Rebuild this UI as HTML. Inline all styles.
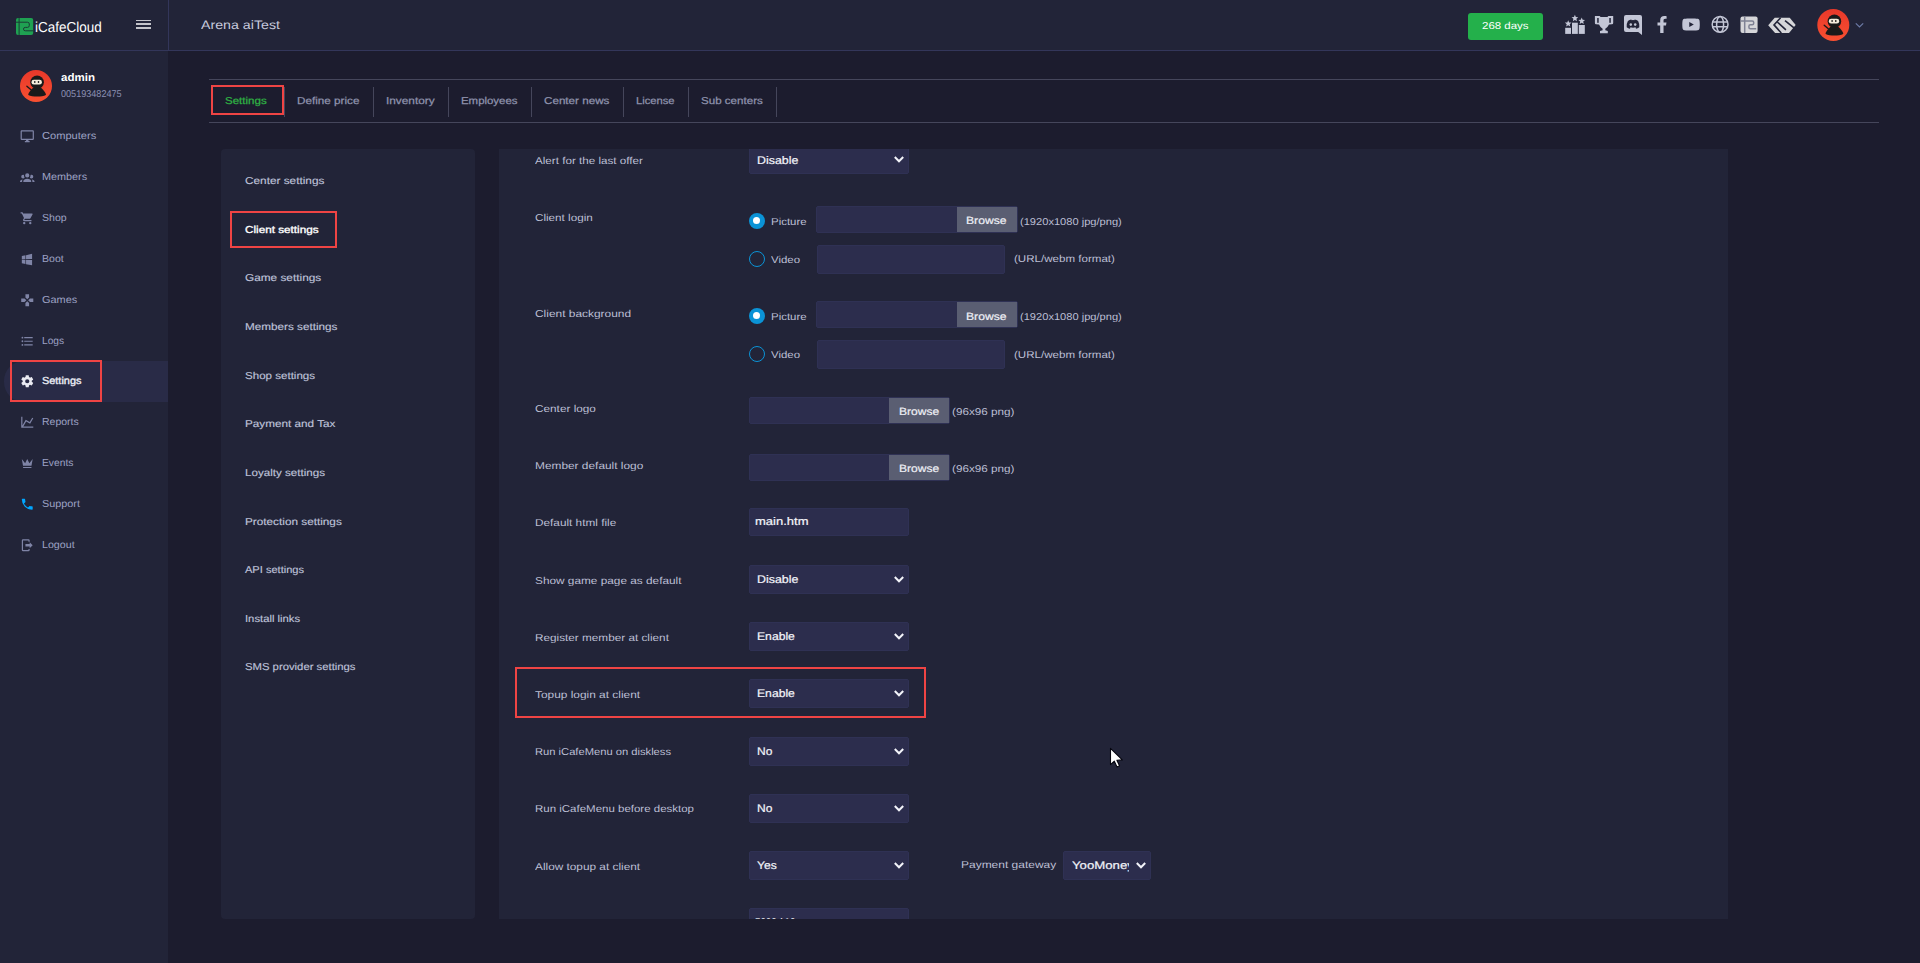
<!DOCTYPE html>
<html lang="en">
<head>
<meta charset="utf-8">
<title>iCafeCloud - Client settings</title>
<style>
*{box-sizing:border-box;margin:0;padding:0}
html,body{width:1920px;height:963px;overflow:hidden;background:#1c1c2e;font-family:"Liberation Sans",sans-serif;}
.abs{position:absolute}
.t,.ts{position:absolute;white-space:nowrap;line-height:20px;transform-origin:0 50%;text-rendering:geometricPrecision;font-family:"Liberation Sans",sans-serif;}
#header{position:absolute;left:0;top:0;width:1920px;height:51px;background:#222438;border-bottom:1px solid #33365a}
#hsep{position:absolute;left:168px;top:0;width:1px;height:50px;background:#33365a}
#sidebar{position:absolute;left:0;top:51px;width:168px;height:912px;background:#222438}
#active{position:absolute;left:4px;top:361px;width:164px;height:41px;background:#292b47;border-radius:20px 0 0 20px}
.red{position:absolute;border:2px solid #ef4444}
.line{position:absolute;background:#45465b}
.panel{position:absolute;background:#222438;border-radius:4px}
.inp{position:absolute;background:#2c2d4d;border:1px solid #2f3154;border-radius:2px}
.btn{position:absolute;background:#5a5e72}
svg{position:absolute;overflow:visible}
.radio{position:absolute;width:16px;height:16px;border-radius:50%}
.radio.on{background:#0b93d6}
.radio.on::after{content:"";position:absolute;left:4.1px;top:4.1px;width:7px;height:7px;border-radius:50%;background:#fff}
.radio.off{border:1.5px solid #0b93d6}
</style>
</head>
<body>
<div id="header"></div>
<div id="hsep"></div>
<div id="sidebar"></div>
<div id="active"></div>

<!-- logo -->
<svg style="left:16px;top:18px" width="17.2" height="17" viewBox="0 0 17.2 17"><rect width="17.2" height="17" rx="2" fill="#1fa152"/><path d="M3.1 0V17M0 4.2H11.500Q13.300 4.200 13.300 6V7.600Q13.300 9.400 11.500 9.400H9.300Q7.500 9.400 7.500 11V11.200Q7.500 12.800 9.300 12.800H17.200" fill="none" stroke="#1b3a35" stroke-width="1"/></svg>
<!-- hamburger -->
<div class="abs" style="left:136px;top:19.7px;width:15px;height:1.6px;background:#c4c4ca"></div>
<div class="abs" style="left:136px;top:23.4px;width:15px;height:1.7px;background:#c4c4ca"></div>
<div class="abs" style="left:136px;top:27.1px;width:15px;height:1.9px;background:#c4c4ca"></div>

<svg style="left:0;top:0" width="1920" height="51" viewBox="0 0 1920 51">
<defs><linearGradient id="av" x1="0" y1="0" x2="0" y2="1"><stop offset="0" stop-color="#e8382a"/><stop offset="1" stop-color="#f85031"/></linearGradient></defs>
<rect x="1468" y="13" width="75" height="27" rx="3" fill="#24b04b"/>
<rect x="1565.200" y="27.800" width="5.800" height="6.100" fill="#c3c6d6"/><rect x="1572" y="22.700" width="5.800" height="11.200" fill="#c3c6d6"/><rect x="1578.800" y="25" width="6" height="8.900" fill="#c3c6d6"/>
<polygon points="1568.20,20.20 1569.13,22.43 1571.53,22.62 1569.70,24.19 1570.26,26.53 1568.20,25.27 1566.14,26.53 1566.70,24.19 1564.87,22.62 1567.27,22.43" fill="#c3c6d6"/>
<polygon points="1574.90,14.80 1575.83,17.03 1578.23,17.22 1576.40,18.79 1576.96,21.13 1574.90,19.88 1572.84,21.13 1573.40,18.79 1571.57,17.22 1573.97,17.03" fill="#c3c6d6"/>
<polygon points="1581.70,17.60 1582.63,19.83 1585.03,20.02 1583.20,21.59 1583.76,23.93 1581.70,22.68 1579.64,23.93 1580.20,21.59 1578.37,20.02 1580.77,19.83" fill="#c3c6d6"/>
<path fill="#c3c6d6" d="M1594.900 15.900H1599.600L1600.600 17H1607.400L1608.400 15.900H1613.200V23Q1613.200 24.200 1612 24.300L1609 24.400Q1607.500 27.500 1605.300 28.800V30.300L1607.800 31V33.200H1600V31L1602.600 30.300V28.800Q1600.500 27.500 1599 24.400L1596 24.300Q1594.900 24.200 1594.900 23Z"/>
<rect x="1597.200" y="18" width="1.500" height="4.800" fill="#222438"/><rect x="1609.300" y="18" width="1.500" height="4.800" fill="#222438"/>
<path fill="#c3c6d6" d="M1626 14.900H1640Q1642 14.900 1642 16.900V34.900L1638.200 31.900H1626Q1624 31.900 1624 29.900V16.900Q1624 14.900 1626 14.900Z"/>
<path fill="#222438" d="M1627.900 20.900Q1629.400 19.700 1631.300 19.500L1631.700 20.200Q1633 20 1634.300 20.200L1634.700 19.500Q1636.600 19.700 1638.100 20.900Q1639.700 23.700 1639.300 27.200Q1637.800 28.400 1636.100 28.700L1635.400 27.600L1636.300 27.100Q1633 28.400 1629.700 27.100L1630.600 27.600L1629.900 28.700Q1628.200 28.400 1626.700 27.200Q1626.300 23.700 1627.900 20.900Z"/>
<ellipse cx="1630.800" cy="24.600" rx="1.250" ry="1.400" fill="#c3c6d6"/><ellipse cx="1635.200" cy="24.600" rx="1.250" ry="1.400" fill="#c3c6d6"/>
<path transform="translate(1656.74 16) scale(0.03320)" fill="#c3c6d6" d="M279.140 288l14.220-92.660h-88.910v-60.130c0-25.350 12.420-50.060 52.240-50.060h40.420V6.260S260.430 0 225.360 0c-73.220 0-121.080 44.380-121.080 124.720v70.620H22.890V288h81.390v224h100.170V288z"/>
<path transform="translate(1681.82 16.37) scale(0.03204 0.03177)" fill="#c3c6d6" d="M549.655 124.083c-6.281-23.650-24.787-42.276-48.284-48.597C458.781 64 288 64 288 64S117.220 64 74.629 75.486c-23.497 6.322-42.003 24.947-48.284 48.597-11.412 42.867-11.412 132.305-11.412 132.305s0 89.438 11.412 132.305c6.281 23.650 24.787 41.500 48.284 47.821C117.220 448 288 448 288 448s170.780 0 213.371-11.486c23.497-6.321 42.003-24.171 48.284-47.821 11.412-42.867 11.412-132.305 11.412-132.305s0-89.438-11.412-132.305zm-317.510 213.508V175.185l142.739 81.205-142.739 81.201z"/>
<g fill="none" stroke="#c3c6d6" stroke-width="1.500"><circle cx="1720.1" cy="24.4" r="7.9"/><ellipse cx="1720.1" cy="24.4" rx="3.500" ry="7.9"/><path d="M1712.5 22.0H1727.6999999999998M1712.5 26.799999999999997H1727.6999999999998" stroke-width="1.400"/></g>
<rect x="1740.500" y="16.600" width="17.100" height="16.400" rx="2" fill="#d6d6d9"/>
<path d="M1744.700 16.600V33M1740.500 20.900H1752.200Q1753.700 20.900 1753.700 22.400V23.200Q1753.700 24.700 1752.200 24.700H1750.400Q1748.900 24.700 1748.900 26.200V27.300Q1748.900 28.800 1750.400 28.800H1756.200" fill="none" stroke="#7f8294" stroke-width="1.500"/>
<polygon points="1768.200,25.300 1774.700,17.800 1789.700,17.800 1795.700,25 1789,33 1775.100,33" fill="#d6d6d9"/>
<g fill="none" stroke="#222438" stroke-width="1.600"><path d="M1780.600 17.800L1774 24.900L1781.300 33"/><path d="M1777.300 22L1785.900 29.900"/><path d="M1785 20.600L1794.600 28.300"/></g>
<polygon points="1796,25.600 1792.300,29.600 1794,31 1797,27" fill="#222438"/>
<g transform="translate(1817.3 9)"><circle cx="16" cy="16" r="16" fill="url(#av)"/><circle cx="17.100" cy="12.200" r="6.800" fill="#1a1a1a"/><path d="M17.100 16.500C14 16.500 11.500 19 9.600 21.800C8.600 23.300 8 24.300 8.400 24.900C10 26 14 26.400 17.100 26.400C20.200 26.400 24.200 26 25.800 24.900C26.200 24.300 25.600 23.300 24.600 21.800C22.700 19 20.200 16.500 17.100 16.500Z" fill="#1a1a1a"/><rect x="11.500" y="9.700" width="10.400" height="4.800" rx="2.300" fill="#f5eddc"/><ellipse cx="14.800" cy="12" rx="0.800" ry="1" fill="#1a1a1a"/><ellipse cx="18.500" cy="12" rx="0.800" ry="1" fill="#1a1a1a"/><path d="M6.900 16.200L11 19.800" stroke="#1a1a1a" stroke-width="1.400" stroke-linecap="round"/></g>
<path d="M1855.800 23.300L1859.500 27L1863.200 23.300" fill="none" stroke="#6c7aa6" stroke-width="1.200"/>
</svg>
<svg style="left:20px;top:70px" width="32" height="32" viewBox="0 0 32 32"><g><circle cx="16" cy="16" r="16" fill="url(#av)"/><circle cx="17.100" cy="12.200" r="6.800" fill="#1a1a1a"/><path d="M17.100 16.500C14 16.500 11.500 19 9.600 21.800C8.600 23.300 8 24.300 8.400 24.900C10 26 14 26.400 17.100 26.400C20.200 26.400 24.200 26 25.800 24.900C26.200 24.300 25.600 23.300 24.600 21.800C22.700 19 20.200 16.500 17.100 16.500Z" fill="#1a1a1a"/><rect x="11.500" y="9.700" width="10.400" height="4.800" rx="2.300" fill="#f5eddc"/><ellipse cx="14.800" cy="12" rx="0.800" ry="1" fill="#1a1a1a"/><ellipse cx="18.500" cy="12" rx="0.800" ry="1" fill="#1a1a1a"/><path d="M6.900 16.200L11 19.800" stroke="#1a1a1a" stroke-width="1.400" stroke-linecap="round"/></g></svg>
<svg style="left:19.7px;top:128.8px" width="14.5" height="14.5" viewBox="0 0 24 24"><path fill="#7f84a6" d="M21,16H3V4H21M21,2H3C1.89,2 1,2.89 1,4V16A2,2 0 0,0 3,18H10V20H8V22H16V20H14V18H21A2,2 0 0,0 23,16V4C23,2.89 22.1,2 21,2Z"/></svg>
<svg style="left:19.7px;top:169.8px" width="14.5" height="14.5" viewBox="0 0 24 24"><path fill="#7f84a6" d="M12,5.5A3.5,3.5 0 0,1 15.5,9A3.5,3.5 0 0,1 12,12.5A3.5,3.5 0 0,1 8.5,9A3.5,3.5 0 0,1 12,5.5M5,8C5.56,8 6.08,8.15 6.53,8.420C6.380,9.850 6.800,11.270 7.660,12.380C7.160,13.340 6.160,14 5,14A3,3 0 0,1 2,11A3,3 0 0,1 5,8M19,8A3,3 0 0,1 22,11A3,3 0 0,1 19,14C17.840,14 16.840,13.340 16.340,12.380C17.200,11.270 17.620,9.850 17.470,8.420C17.920,8.150 18.440,8 19,8M5.500,18.250C5.500,16.180 8.410,14.500 12,14.500C15.590,14.500 18.500,16.180 18.500,18.250V20H5.500V18.250M0,20V18.500C0,17.110 1.890,15.940 4.450,15.600C3.860,16.280 3.500,17.220 3.500,18.250V20H0M24,20H20.500V18.250C20.500,17.220 20.140,16.280 19.550,15.600C22.110,15.940 24,17.110 24,18.500V20Z"/></svg>
<svg style="left:19.7px;top:210.8px" width="14.5" height="14.5" viewBox="0 0 24 24"><path fill="#7f84a6" d="M17,18C15.890,18 15,18.890 15,20A2,2 0 0,0 17,22A2,2 0 0,0 19,20C19,18.890 18.100,18 17,18M1,2V4H3L6.600,11.590L5.240,14.040C5.090,14.320 5,14.650 5,15A2,2 0 0,0 7,17H19V15H7.420A0.250,0.250 0 0,1 7.170,14.750C7.170,14.700 7.180,14.660 7.200,14.630L8.100,13H15.550C16.300,13 16.960,12.580 17.300,11.970L20.880,5.500C20.950,5.340 21,5.170 21,5A1,1 0 0,0 20,4H5.210L4.270,2M7,18C5.890,18 5,18.890 5,20A2,2 0 0,0 7,22A2,2 0 0,0 9,20C9,18.890 8.100,18 7,18Z"/></svg>
<svg style="left:19.7px;top:251.8px" width="14.5" height="14.5" viewBox="0 0 24 24"><path fill="#7f84a6" d="M3,12V6.750L9,5.430V11.910L3,12M20,3V11.750L10,11.900V5.210L20,3M3,13L9,13.090V19.900L3,18.750V13M20,13.250V22L10,20.090V13.100L20,13.250Z"/></svg>
<svg style="left:19.7px;top:292.8px" width="14.5" height="14.5" viewBox="0 0 24 24"><path fill="#7f84a6" d="M16.500,9L13.500,12L16.500,15H22V9M9,16.500V22H15V16.500L12,13.500M7.500,9H2V15H7.500L10.500,12M15,7.500V2H9V7.500L12,10.500L15,7.500Z"/></svg>
<svg style="left:19.7px;top:333.8px" width="14.5" height="14.5" viewBox="0 0 24 24"><path fill="#7f84a6" d="M7,5H21V7H7V5M7,13V11H21V13H7M4,4.500A1.500,1.500 0 0,1 5.500,6A1.500,1.500 0 0,1 4,7.500A1.500,1.500 0 0,1 2.500,6A1.500,1.500 0 0,1 4,4.500M4,10.500A1.500,1.500 0 0,1 5.500,12A1.500,1.500 0 0,1 4,13.500A1.500,1.500 0 0,1 2.500,12A1.500,1.500 0 0,1 4,10.500M7,19V17H21V19H7M4,16.500A1.500,1.500 0 0,1 5.500,18A1.500,1.500 0 0,1 4,19.500A1.500,1.500 0 0,1 2.500,18A1.500,1.500 0 0,1 4,16.500Z"/></svg>
<svg style="left:19.7px;top:374.1px" width="14.5" height="14.5" viewBox="0 0 24 24"><path fill="#e9eaf2" d="M12,15.500A3.500,3.500 0 0,1 8.500,12A3.500,3.500 0 0,1 12,8.500A3.500,3.500 0 0,1 15.500,12A3.500,3.500 0 0,1 12,15.500M19.430,12.970C19.470,12.650 19.500,12.330 19.500,12C19.500,11.670 19.470,11.340 19.430,11L21.540,9.370C21.730,9.220 21.780,8.950 21.660,8.730L19.660,5.270C19.540,5.050 19.270,4.960 19.050,5.050L16.560,6.050C16.040,5.660 15.500,5.320 14.870,5.070L14.500,2.420C14.460,2.180 14.250,2 14,2H10C9.750,2 9.540,2.180 9.500,2.420L9.130,5.070C8.500,5.320 7.960,5.660 7.440,6.050L4.950,5.050C4.730,4.960 4.460,5.050 4.340,5.270L2.340,8.730C2.210,8.950 2.270,9.220 2.460,9.370L4.570,11C4.530,11.340 4.500,11.670 4.500,12C4.500,12.330 4.530,12.650 4.570,12.970L2.460,14.630C2.270,14.780 2.210,15.050 2.340,15.270L4.340,18.730C4.460,18.950 4.730,19.030 4.950,18.950L7.440,17.940C7.960,18.340 8.500,18.680 9.130,18.930L9.500,21.580C9.540,21.820 9.750,22 10,22H14C14.250,22 14.460,21.820 14.500,21.580L14.870,18.930C15.500,18.670 16.040,18.340 16.560,17.940L19.050,18.950C19.270,19.030 19.540,18.950 19.660,18.730L21.660,15.270C21.780,15.050 21.730,14.780 21.540,14.630L19.430,12.970Z"/></svg>
<svg style="left:19.7px;top:414.8px" width="14.5" height="14.5" viewBox="0 0 24 24"><path fill="#7f84a6" d="M16,11.780L20.240,4.450L21.970,5.450L16.740,14.500L10.230,10.750L5.460,19H22V21H2V3H4V17.540L9.500,8L16,11.780Z"/></svg>
<svg style="left:19.7px;top:455.8px" width="14.5" height="14.5" viewBox="0 0 24 24"><path fill="#7f84a6" d="M5,16L3,5L8.500,12L12,5L15.500,12L21,5L19,16H5M19,19A1,1 0 0,1 18,20H6A1,1 0 0,1 5,19V18H19V19Z"/></svg>
<svg style="left:19.7px;top:496.8px" width="14.5" height="14.5" viewBox="0 0 24 24"><path fill="#00a6ff" d="M6.620,10.790C8.060,13.620 10.380,15.940 13.210,17.380L15.410,15.180C15.690,14.900 16.080,14.820 16.430,14.930C17.550,15.300 18.750,15.500 20,15.500A1,1 0 0,1 21,16.500V20A1,1 0 0,1 20,21A17,17 0 0,1 3,4A1,1 0 0,1 4,3H7.500A1,1 0 0,1 8.500,4C8.500,5.250 8.700,6.450 9.070,7.570C9.180,7.920 9.100,8.310 8.820,8.590L6.620,10.790Z"/></svg>
<svg style="left:19.7px;top:537.8px" width="14.5" height="14.5" viewBox="0 0 24 24"><path fill="#7f84a6" d="M16,17V14H9V10H16V7L21,12L16,17M14,2A2,2 0 0,1 16,4V6H14V4H5V20H14V18H16V20A2,2 0 0,1 14,22H5A2,2 0 0,1 3,20V4A2,2 0 0,1 5,2H14Z"/></svg>

<!-- tabs -->
<div class="line" style="left:209px;top:79px;width:1670px;height:1px"></div>
<div class="line" style="left:209px;top:122px;width:1670px;height:1px"></div>
<div class="line" style="left:284px;top:87px;width:1px;height:30px"></div>
<div class="line" style="left:373px;top:87px;width:1px;height:30px"></div>
<div class="line" style="left:448px;top:87px;width:1px;height:30px"></div>
<div class="line" style="left:531px;top:87px;width:1px;height:30px"></div>
<div class="line" style="left:623px;top:87px;width:1px;height:30px"></div>
<div class="line" style="left:688px;top:87px;width:1px;height:30px"></div>
<div class="line" style="left:776px;top:87px;width:1px;height:30px"></div>
<div class="red" style="left:211px;top:85px;width:73px;height:30px"></div>

<!-- panels -->
<div class="panel" style="left:221px;top:149px;width:254px;height:770px"></div>
<div class="panel" id="rp" style="left:499px;top:149px;width:1229px;height:770px;overflow:hidden;border-radius:0">
<div class="inp" style="left:250px;top:-4px;width:160px;height:29px;"></div>
<svg style="left:395px;top:7.0px" width="10" height="7" viewBox="0 0 10 7"><path d="M0.800 1L5 5.300L9.200 1" fill="none" stroke="#f3f4fa" stroke-width="2" stroke-linecap="butt" stroke-linejoin="miter"/></svg>
<div class="inp" style="left:250px;top:416px;width:160px;height:29px;"></div>
<svg style="left:395px;top:427.0px" width="10" height="7" viewBox="0 0 10 7"><path d="M0.800 1L5 5.300L9.200 1" fill="none" stroke="#f3f4fa" stroke-width="2" stroke-linecap="butt" stroke-linejoin="miter"/></svg>
<div class="inp" style="left:250px;top:473px;width:160px;height:29px;"></div>
<svg style="left:395px;top:484.0px" width="10" height="7" viewBox="0 0 10 7"><path d="M0.800 1L5 5.300L9.200 1" fill="none" stroke="#f3f4fa" stroke-width="2" stroke-linecap="butt" stroke-linejoin="miter"/></svg>
<div class="inp" style="left:250px;top:530px;width:160px;height:29px;"></div>
<svg style="left:395px;top:541.0px" width="10" height="7" viewBox="0 0 10 7"><path d="M0.800 1L5 5.300L9.200 1" fill="none" stroke="#f3f4fa" stroke-width="2" stroke-linecap="butt" stroke-linejoin="miter"/></svg>
<div class="inp" style="left:250px;top:588px;width:160px;height:28.5px;"></div>
<svg style="left:395px;top:598.75px" width="10" height="7" viewBox="0 0 10 7"><path d="M0.800 1L5 5.300L9.200 1" fill="none" stroke="#f3f4fa" stroke-width="2" stroke-linecap="butt" stroke-linejoin="miter"/></svg>
<div class="inp" style="left:250px;top:645px;width:160px;height:29px;"></div>
<svg style="left:395px;top:656.0px" width="10" height="7" viewBox="0 0 10 7"><path d="M0.800 1L5 5.300L9.200 1" fill="none" stroke="#f3f4fa" stroke-width="2" stroke-linecap="butt" stroke-linejoin="miter"/></svg>
<div class="inp" style="left:250px;top:702px;width:160px;height:29px;"></div>
<svg style="left:395px;top:713.0px" width="10" height="7" viewBox="0 0 10 7"><path d="M0.800 1L5 5.300L9.200 1" fill="none" stroke="#f3f4fa" stroke-width="2" stroke-linecap="butt" stroke-linejoin="miter"/></svg>
<div class="inp" style="left:250px;top:759px;width:160px;height:29px;"></div>
<svg style="left:395px;top:770.0px" width="10" height="7" viewBox="0 0 10 7"><path d="M0.800 1L5 5.300L9.200 1" fill="none" stroke="#f3f4fa" stroke-width="2" stroke-linecap="butt" stroke-linejoin="miter"/></svg>
<div class="inp" style="left:250px;top:359px;width:160px;height:28px;"></div>
<div class="inp" style="left:564px;top:702px;width:88px;height:29px;"></div>
<svg style="left:637px;top:713.0px" width="10" height="7" viewBox="0 0 10 7"><path d="M0.800 1L5 5.300L9.200 1" fill="none" stroke="#f3f4fa" stroke-width="2" stroke-linecap="butt" stroke-linejoin="miter"/></svg>
<div class="inp" style="left:317px;top:57.19999999999999px;width:201.5px;height:26.5px;"></div>
<div class="btn" style="left:458px;top:58.19999999999999px;width:60px;height:24.6px"></div>
<div class="inp" style="left:318px;top:96.30000000000001px;width:188px;height:28.5px;"></div>
<div class="radio on" style="left:250px;top:64px"></div>
<div class="radio off" style="left:250px;top:102px"></div>
<div class="inp" style="left:317px;top:152.39999999999998px;width:201.5px;height:26.5px;"></div>
<div class="btn" style="left:458px;top:153.39999999999998px;width:60px;height:24.6px"></div>
<div class="inp" style="left:318px;top:191px;width:188px;height:28.7px;"></div>
<div class="radio on" style="left:250px;top:159.2px"></div>
<div class="radio off" style="left:250px;top:197.2px"></div>
<div class="inp" style="left:250px;top:248.2px;width:200.5px;height:26.5px;"></div>
<div class="btn" style="left:390px;top:249.2px;width:60px;height:24.6px"></div>
<div class="inp" style="left:250px;top:305.2px;width:200.5px;height:26.5px;"></div>
<div class="btn" style="left:390px;top:306.2px;width:60px;height:24.6px"></div>

<div class="abs" style="left:573.4px;top:707px;width:56.2px;height:20px;overflow:hidden"><span class="ts" style="left:0;top:0;font-size:11px;color:#f3f4fa;-webkit-text-stroke:0.2px #f3f4fa;transform:scaleX(1.2)">YooMoney</span></div>
<span class="ts" style="left:255.6px;top:764px;font-size:11px;color:#f3f4fa;-webkit-text-stroke:0.2px #f3f4fa;transform:scaleX(0.88)">5000 / 10</span>
</div>
<div class="red" style="left:230px;top:210.5px;width:107px;height:37.5px"></div>
<div class="red" style="left:10px;top:360px;width:92px;height:42px"></div>
<div class="red" style="left:515px;top:667px;width:411px;height:51px"></div>

<span class="t" style="left:200.9px;top:15.00px;font-size:12.3px;font-weight:400;color:#c6c9dc;transform:scaleX(1.1557);">Arena aiTest</span>
<span class="t" style="left:1482.1px;top:17.00px;font-size:10px;font-weight:400;color:#ffffff;transform:scaleX(1.1480);">268 days</span>
<span class="t" style="left:35.1px;top:18.00px;font-size:14.4px;font-weight:400;color:#ffffff;transform:scaleX(0.9368);">iCafeCloud</span>
<span class="t" style="left:61.3px;top:68.00px;font-size:11px;font-weight:700;color:#ffffff;transform:scaleX(1.0492);">admin</span>
<span class="t" style="left:61.3px;top:85.00px;font-size:9.9px;font-weight:400;color:#8b90b3;transform:scaleX(0.9195);">005193482475</span>
<span class="t" style="left:42.2px;top:127.00px;font-size:10.2px;font-weight:400;color:#9da2c4;transform:scaleX(1.0897);">Computers</span>
<span class="t" style="left:42.2px;top:168.00px;font-size:10.2px;font-weight:400;color:#9da2c4;transform:scaleX(1.0620);">Members</span>
<span class="t" style="left:42.2px;top:209.00px;font-size:10.2px;font-weight:400;color:#9da2c4;transform:scaleX(1.0337);">Shop</span>
<span class="t" style="left:42.2px;top:250.00px;font-size:10.2px;font-weight:400;color:#9da2c4;transform:scaleX(1.0349);">Boot</span>
<span class="t" style="left:42.2px;top:291.00px;font-size:10.2px;font-weight:400;color:#9da2c4;transform:scaleX(1.0717);">Games</span>
<span class="t" style="left:42.2px;top:332.00px;font-size:10.2px;font-weight:400;color:#9da2c4;transform:scaleX(0.9958);">Logs</span>
<span class="t" style="left:42.2px;top:372.00px;font-size:10.2px;font-weight:400;color:#eceef6;transform:scaleX(1.0703);-webkit-text-stroke:0.35px #eceef6;">Settings</span>
<span class="t" style="left:42.2px;top:413.00px;font-size:10.2px;font-weight:400;color:#9da2c4;transform:scaleX(1.0288);">Reports</span>
<span class="t" style="left:42.2px;top:454.00px;font-size:10.2px;font-weight:400;color:#9da2c4;transform:scaleX(1.0078);">Events</span>
<span class="t" style="left:42.2px;top:495.00px;font-size:10.2px;font-weight:400;color:#9da2c4;transform:scaleX(1.0648);">Support</span>
<span class="t" style="left:42.2px;top:536.00px;font-size:10.2px;font-weight:400;color:#9da2c4;transform:scaleX(1.0458);">Logout</span>
<span class="t" style="left:224.6px;top:92.00px;font-size:10px;font-weight:400;color:#2fb344;transform:scaleX(1.1538);-webkit-text-stroke:0.25px #2fb344;">Settings</span>
<span class="t" style="left:297.2px;top:92.00px;font-size:10px;font-weight:400;color:#8f93ad;transform:scaleX(1.1694);-webkit-text-stroke:0.25px #8f93ad;">Define price</span>
<span class="t" style="left:386.0px;top:92.00px;font-size:10px;font-weight:400;color:#8f93ad;transform:scaleX(1.1837);-webkit-text-stroke:0.25px #8f93ad;">Inventory</span>
<span class="t" style="left:461.2px;top:92.00px;font-size:10px;font-weight:400;color:#8f93ad;transform:scaleX(1.1421);-webkit-text-stroke:0.25px #8f93ad;">Employees</span>
<span class="t" style="left:544.2px;top:92.00px;font-size:10px;font-weight:400;color:#8f93ad;transform:scaleX(1.1649);-webkit-text-stroke:0.25px #8f93ad;">Center news</span>
<span class="t" style="left:636.1px;top:92.00px;font-size:10px;font-weight:400;color:#8f93ad;transform:scaleX(1.1199);-webkit-text-stroke:0.25px #8f93ad;">License</span>
<span class="t" style="left:701.2px;top:92.00px;font-size:10px;font-weight:400;color:#8f93ad;transform:scaleX(1.1578);-webkit-text-stroke:0.25px #8f93ad;">Sub centers</span>
<span class="t" style="left:244.5px;top:172.00px;font-size:10px;font-weight:400;color:#bfc2d9;transform:scaleX(1.1804);-webkit-text-stroke:0.15px #bfc2d9;">Center settings</span>
<span class="t" style="left:244.5px;top:221.00px;font-size:10px;font-weight:400;color:#ffffff;transform:scaleX(1.1717);-webkit-text-stroke:0.35px #fff;">Client settings</span>
<span class="t" style="left:244.5px;top:269.00px;font-size:10px;font-weight:400;color:#bfc2d9;transform:scaleX(1.1817);-webkit-text-stroke:0.15px #bfc2d9;">Game settings</span>
<span class="t" style="left:244.5px;top:318.00px;font-size:10px;font-weight:400;color:#bfc2d9;transform:scaleX(1.1708);-webkit-text-stroke:0.15px #bfc2d9;">Members settings</span>
<span class="t" style="left:244.5px;top:367.00px;font-size:10px;font-weight:400;color:#bfc2d9;transform:scaleX(1.1566);-webkit-text-stroke:0.15px #bfc2d9;">Shop settings</span>
<span class="t" style="left:244.5px;top:415.00px;font-size:10px;font-weight:400;color:#bfc2d9;transform:scaleX(1.1726);-webkit-text-stroke:0.15px #bfc2d9;">Payment and Tax</span>
<span class="t" style="left:244.5px;top:464.00px;font-size:10px;font-weight:400;color:#bfc2d9;transform:scaleX(1.1605);-webkit-text-stroke:0.15px #bfc2d9;">Loyalty settings</span>
<span class="t" style="left:244.5px;top:513.00px;font-size:10px;font-weight:400;color:#bfc2d9;transform:scaleX(1.1767);-webkit-text-stroke:0.15px #bfc2d9;">Protection settings</span>
<span class="t" style="left:244.5px;top:561.00px;font-size:10px;font-weight:400;color:#bfc2d9;transform:scaleX(1.1057);-webkit-text-stroke:0.15px #bfc2d9;">API settings</span>
<span class="t" style="left:244.5px;top:610.00px;font-size:10px;font-weight:400;color:#bfc2d9;transform:scaleX(1.1246);-webkit-text-stroke:0.15px #bfc2d9;">Install links</span>
<span class="t" style="left:244.5px;top:658.00px;font-size:10px;font-weight:400;color:#bfc2d9;transform:scaleX(1.1295);-webkit-text-stroke:0.15px #bfc2d9;">SMS provider settings</span>
<span class="t" style="left:535.0px;top:152.00px;font-size:10px;font-weight:400;color:#bcbfd4;transform:scaleX(1.1647);">Alert for the last offer</span>
<span class="t" style="left:535.0px;top:209.00px;font-size:10px;font-weight:400;color:#bcbfd4;transform:scaleX(1.1680);">Client login</span>
<span class="t" style="left:535.0px;top:305.00px;font-size:10px;font-weight:400;color:#bcbfd4;transform:scaleX(1.1922);">Client background</span>
<span class="t" style="left:535.0px;top:400.00px;font-size:10px;font-weight:400;color:#bcbfd4;transform:scaleX(1.1779);">Center logo</span>
<span class="t" style="left:535.0px;top:457.00px;font-size:10px;font-weight:400;color:#bcbfd4;transform:scaleX(1.1879);">Member default logo</span>
<span class="t" style="left:535.0px;top:514.00px;font-size:10px;font-weight:400;color:#bcbfd4;transform:scaleX(1.1781);">Default html file</span>
<span class="t" style="left:535.0px;top:572.00px;font-size:10px;font-weight:400;color:#bcbfd4;transform:scaleX(1.1816);">Show game page as default</span>
<span class="t" style="left:535.0px;top:629.00px;font-size:10px;font-weight:400;color:#bcbfd4;transform:scaleX(1.1752);">Register member at client</span>
<span class="t" style="left:535.0px;top:686.00px;font-size:10px;font-weight:400;color:#bcbfd4;transform:scaleX(1.1888);">Topup login at client</span>
<span class="t" style="left:535.0px;top:743.00px;font-size:10px;font-weight:400;color:#bcbfd4;transform:scaleX(1.1172);">Run iCafeMenu on diskless</span>
<span class="t" style="left:535.0px;top:800.00px;font-size:10px;font-weight:400;color:#bcbfd4;transform:scaleX(1.1487);">Run iCafeMenu before desktop</span>
<span class="t" style="left:535.0px;top:858.00px;font-size:10px;font-weight:400;color:#bcbfd4;transform:scaleX(1.1815);">Allow topup at client</span>
<span class="t" style="left:961.4px;top:856.00px;font-size:10px;font-weight:400;color:#bcbfd4;transform:scaleX(1.1975);">Payment gateway</span>
<span class="t" style="left:770.8px;top:213.00px;font-size:10px;font-weight:400;color:#bcbfd4;transform:scaleX(1.1438);">Picture</span>
<span class="t" style="left:770.8px;top:251.00px;font-size:10px;font-weight:400;color:#bcbfd4;transform:scaleX(1.1454);">Video</span>
<span class="t" style="left:966.1px;top:211.00px;font-size:10.5px;font-weight:400;color:#eeeff5;transform:scaleX(1.1595);-webkit-text-stroke:0.2px #eeeff5;">Browse</span>
<span class="t" style="left:1020.1px;top:213.00px;font-size:10px;font-weight:400;color:#bcbfd4;transform:scaleX(1.1095);">(1920x1080 jpg/png)</span>
<span class="t" style="left:1014.2px;top:250.00px;font-size:10px;font-weight:400;color:#bcbfd4;transform:scaleX(1.1564);">(URL/webm format)</span>
<span class="t" style="left:770.8px;top:308.00px;font-size:10px;font-weight:400;color:#bcbfd4;transform:scaleX(1.1438);">Picture</span>
<span class="t" style="left:770.8px;top:346.00px;font-size:10px;font-weight:400;color:#bcbfd4;transform:scaleX(1.1454);">Video</span>
<span class="t" style="left:966.1px;top:307.00px;font-size:10.5px;font-weight:400;color:#eeeff5;transform:scaleX(1.1595);-webkit-text-stroke:0.2px #eeeff5;">Browse</span>
<span class="t" style="left:1020.1px;top:308.00px;font-size:10px;font-weight:400;color:#bcbfd4;transform:scaleX(1.1095);">(1920x1080 jpg/png)</span>
<span class="t" style="left:1014.2px;top:346.00px;font-size:10px;font-weight:400;color:#bcbfd4;transform:scaleX(1.1564);">(URL/webm format)</span>
<span class="t" style="left:898.6px;top:402.00px;font-size:10.5px;font-weight:400;color:#eeeff5;transform:scaleX(1.1481);-webkit-text-stroke:0.2px #eeeff5;">Browse</span>
<span class="t" style="left:952.4px;top:403.00px;font-size:10px;font-weight:400;color:#bcbfd4;transform:scaleX(1.1710);">(96x96 png)</span>
<span class="t" style="left:898.6px;top:459.00px;font-size:10.5px;font-weight:400;color:#eeeff5;transform:scaleX(1.1481);-webkit-text-stroke:0.2px #eeeff5;">Browse</span>
<span class="t" style="left:952.4px;top:460.00px;font-size:10px;font-weight:400;color:#bcbfd4;transform:scaleX(1.1710);">(96x96 png)</span>
<span class="t" style="left:754.6px;top:512.00px;font-size:11px;font-weight:400;color:#f3f4fa;transform:scaleX(1.1823);-webkit-text-stroke:0.2px #f3f4fa;">main.htm</span>
<span class="t" style="left:757.3px;top:151.00px;font-size:11px;font-weight:400;color:#f3f4fa;transform:scaleX(1.1284);-webkit-text-stroke:0.2px #f3f4fa;">Disable</span>
<span class="t" style="left:757.3px;top:570.00px;font-size:11px;font-weight:400;color:#f3f4fa;transform:scaleX(1.1284);-webkit-text-stroke:0.2px #f3f4fa;">Disable</span>
<span class="t" style="left:757.3px;top:627.00px;font-size:11px;font-weight:400;color:#f3f4fa;transform:scaleX(1.1061);-webkit-text-stroke:0.2px #f3f4fa;">Enable</span>
<span class="t" style="left:757.3px;top:684.00px;font-size:11px;font-weight:400;color:#f3f4fa;transform:scaleX(1.1061);-webkit-text-stroke:0.2px #f3f4fa;">Enable</span>
<span class="t" style="left:757.3px;top:742.00px;font-size:11px;font-weight:400;color:#f3f4fa;transform:scaleX(1.0951);-webkit-text-stroke:0.2px #f3f4fa;">No</span>
<span class="t" style="left:757.3px;top:799.00px;font-size:11px;font-weight:400;color:#f3f4fa;transform:scaleX(1.0951);-webkit-text-stroke:0.2px #f3f4fa;">No</span>
<span class="t" style="left:757.3px;top:856.00px;font-size:11px;font-weight:400;color:#f3f4fa;transform:scaleX(1.0973);-webkit-text-stroke:0.2px #f3f4fa;">Yes</span>

<!-- cursor -->
<svg style="left:1105px;top:745px" width="20" height="25" viewBox="1105 745 20 25"><path d="M1110.500 748.300V764.600L1114.300 761.200L1117 766.900L1119.500 765.800L1116.900 760.200L1122.300 759.900Z" fill="#fff" stroke="#05050f" stroke-width="1.100" stroke-linejoin="round"/></svg>
</body>
</html>
